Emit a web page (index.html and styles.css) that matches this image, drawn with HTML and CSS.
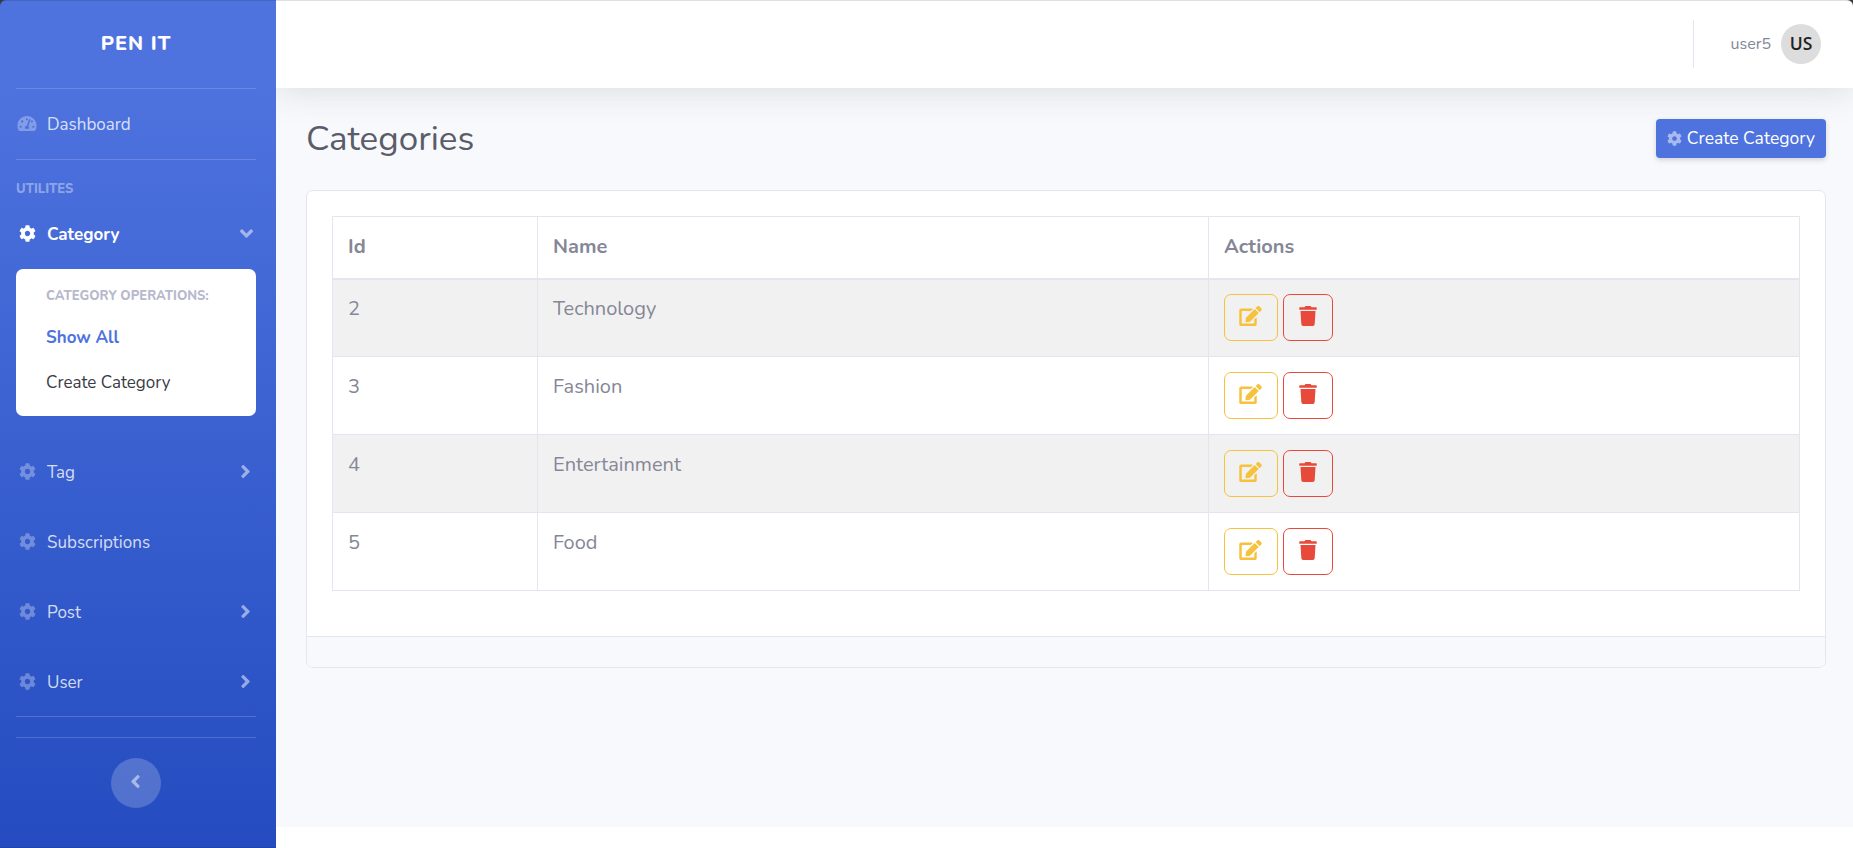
FILE: index.html
```html
<!DOCTYPE html>
<html lang="en">
<head>
<meta charset="utf-8">
<title>Categories</title>
<link rel="stylesheet" href="styles.css">
</head>
<body>
<svg class="sprite" aria-hidden="true">
  <symbol id="cog" viewBox="0 0 512 512"><path d="M487.4 315.7l-42.6-24.6c4.3-23.2 4.3-47 0-70.2l42.6-24.6c4.9-2.8 7.1-8.6 5.5-14-11.1-35.6-30-67.8-54.7-94.6-3.8-4.1-10-5.1-14.8-2.3L380.8 110c-17.9-15.4-38.5-27.3-60.8-35.1V25.8c0-5.6-3.9-10.5-9.4-11.7-36.7-8.2-74.3-7.8-109.2 0-5.5 1.2-9.4 6.1-9.4 11.7V75c-22.2 7.9-42.8 19.8-60.8 35.1L88.7 85.5c-4.9-2.8-11-1.9-14.8 2.3-24.7 26.7-43.6 58.9-54.7 94.6-1.7 5.4.6 11.2 5.5 14L67.3 221c-4.3 23.2-4.3 47 0 70.2l-42.6 24.6c-4.9 2.8-7.1 8.6-5.5 14 11.1 35.6 30 67.8 54.7 94.6 3.8 4.1 10 5.1 14.8 2.3l42.6-24.6c17.9 15.4 38.5 27.3 60.8 35.1v49.2c0 5.6 3.9 10.5 9.4 11.7 36.7 8.2 74.3 7.8 109.2 0 5.5-1.2 9.4-6.1 9.4-11.7v-49.2c22.2-7.9 42.8-19.8 60.8-35.1l42.6 24.6c4.9 2.8 11 1.9 14.8-2.3 24.7-26.7 43.6-58.9 54.7-94.6 1.5-5.5-.7-11.3-5.6-14.1zM256 336c-44.1 0-80-35.9-80-80s35.9-80 80-80 80 35.9 80 80-35.9 80-80 80z"/></symbol>
  <symbol id="gauge" viewBox="0 0 576 512"><path d="M288 32C128.94 32 0 160.94 0 320c0 52.8 14.25 102.26 39.06 144.8 5.61 9.62 16.3 15.2 27.44 15.2h443c11.14 0 21.83-5.58 27.44-15.2C561.75 422.26 576 372.8 576 320c0-159.06-128.94-288-288-288zm0 64c14.71 0 26.58 10.13 30.32 23.65-1.11 2.26-2.64 4.23-3.45 6.67l-9.22 27.67c-5.13 3.49-10.97 6.01-17.64 6.01-17.67 0-32-14.33-32-32S270.33 96 288 96zM96 384c-17.67 0-32-14.33-32-32s14.33-32 32-32 32 14.33 32 32-14.33 32-32 32zm48-160c-17.67 0-32-14.33-32-32s14.33-32 32-32 32 14.33 32 32-14.33 32-32 32zm246.77-72.41l-61.33 184C343.13 347.33 352 364.54 352 384c0 11.72-3.38 22.55-8.88 32H232.88c-5.5-9.45-8.88-20.28-8.88-32 0-33.94 26.5-61.43 59.9-63.59l61.34-184.01c4.17-12.56 17.73-19.45 30.36-15.17 12.57 4.19 19.35 17.79 15.17 30.36zm14.66 57.2l15.52-46.55c3.47-1.29 7.13-2.23 11.05-2.23 17.67 0 32 14.33 32 32s-14.33 32-32 32c-11.38-.01-20.89-6.28-26.57-15.22zM480 384c-17.67 0-32-14.33-32-32s14.33-32 32-32 32 14.33 32 32-14.33 32-32 32z"/></symbol>
  <symbol id="angle" viewBox="24 96 208 320"><path d="M224.3 273l-136 136c-9.4 9.4-24.6 9.4-33.9 0l-22.6-22.6c-9.4-9.4-9.4-24.6 0-33.9l96.4-96.4-96.4-96.4c-9.4-9.4-9.4-24.6 0-33.9L54.3 103c9.4-9.4 24.6-9.4 33.9 0l136 136c9.5 9.4 9.5 24.6.1 34z"/></symbol>
  <symbol id="edit" viewBox="0 0 576 512"><path d="M402.6 83.2l90.2 90.2c3.8 3.8 3.8 10 0 13.8L274.4 405.6l-92.8 10.3c-12.4 1.4-22.9-9.1-21.5-21.5l10.3-92.8L388.8 83.2c3.8-3.8 10-3.8 13.8 0zm162-22.9l-48.8-48.8c-15.2-15.2-39.9-15.2-55.2 0l-35.4 35.4c-3.8 3.8-3.8 10 0 13.8l90.2 90.2c3.8 3.8 10 3.8 13.8 0l35.4-35.4c15.2-15.3 15.2-40 0-55.2zM384 346.2V448H64V128h229.8c3.2 0 6.2-1.3 8.5-3.5l40-40c7.6-7.6 2.2-20.5-8.5-20.5H48C21.5 64 0 85.5 0 112v352c0 26.5 21.5 48 48 48h352c26.5 0 48-21.5 48-48V306.2c0-10.7-12.9-16-20.5-8.5l-40 40c-2.2 2.3-3.5 5.3-3.5 8.5z"/></symbol>
  <symbol id="trash" viewBox="0 0 448 512"><path d="M432 32H312l-9.4-18.7A24 24 0 0 0 281.1 0H166.8a23.72 23.72 0 0 0-21.4 13.3L136 32H16A16 16 0 0 0 0 48v32a16 16 0 0 0 16 16h416a16 16 0 0 0 16-16V48a16 16 0 0 0-16-16zM53.2 467a48 48 0 0 0 47.9 45h245.8a48 48 0 0 0 47.9-45L416 128H32z"/></symbol>
</svg>
<div class="wrapper">
  <nav class="sidebar">
    <a class="brand">PEN IT</a>
    <hr class="divider">
    <a class="nav-link"><span class="nav-icon"><svg class="gauge"><use href="#gauge"/></svg></span><span class="nav-text">Dashboard</span></a>
    <hr class="divider">
    <div class="heading">UTILITES</div>
    <a class="nav-link active"><span class="nav-icon"><svg class="cog"><use href="#cog"/></svg></span><span class="nav-text">Category</span><svg class="caret down"><use href="#angle"/></svg></a>
    <div class="submenu">
      <h6 class="submenu-title">CATEGORY OPERATIONS:</h6>
      <a class="submenu-item current">Show All</a>
      <a class="submenu-item">Create Category</a>
    </div>
    <a class="nav-link"><span class="nav-icon"><svg class="cog"><use href="#cog"/></svg></span><span class="nav-text">Tag</span><svg class="caret"><use href="#angle"/></svg></a>
    <a class="nav-link"><span class="nav-icon"><svg class="cog"><use href="#cog"/></svg></span><span class="nav-text">Subscriptions</span></a>
    <a class="nav-link"><span class="nav-icon"><svg class="cog"><use href="#cog"/></svg></span><span class="nav-text">Post</span><svg class="caret"><use href="#angle"/></svg></a>
    <a class="nav-link last"><span class="nav-icon"><svg class="cog"><use href="#cog"/></svg></span><span class="nav-text">User</span><svg class="caret"><use href="#angle"/></svg></a>
    <hr class="divider">
    <hr class="divider spaced">
    <button class="toggle"><svg class="caret left"><use href="#angle"/></svg></button>
  </nav>
  <div class="content">
    <header class="topbar">
      <div class="topbar-divider"></div>
      <span class="username">user5</span>
      <span class="avatar">US</span>
    </header>
    <main class="page">
      <div class="page-head">
        <h1>Categories</h1>
        <a class="btn-create"><svg class="cog"><use href="#cog"/></svg><span>Create Category</span></a>
      </div>
      <section class="card">
        <div class="card-body">
          <table>
            <colgroup><col class="col-id"><col class="col-name"><col></colgroup>
            <thead><tr><th>Id</th><th>Name</th><th>Actions</th></tr></thead>
            <tbody>
              <tr><td>2</td><td>Technology</td><td><div class="actions"><a class="btn edit"><svg><use href="#edit"/></svg></a><a class="btn delete"><svg><use href="#trash"/></svg></a></div></td></tr>
              <tr><td>3</td><td>Fashion</td><td><div class="actions"><a class="btn edit"><svg><use href="#edit"/></svg></a><a class="btn delete"><svg><use href="#trash"/></svg></a></div></td></tr>
              <tr><td>4</td><td>Entertainment</td><td><div class="actions"><a class="btn edit"><svg><use href="#edit"/></svg></a><a class="btn delete"><svg><use href="#trash"/></svg></a></div></td></tr>
              <tr><td>5</td><td>Food</td><td><div class="actions"><a class="btn edit"><svg><use href="#edit"/></svg></a><a class="btn delete"><svg><use href="#trash"/></svg></a></div></td></tr>
            </tbody>
          </table>
        </div>
        <div class="card-footer"></div>
      </section>
    </main>
  </div>
</div>
</body>
</html>
```
FILE: styles.css
```css
* { box-sizing: border-box; }

body {
  margin: 0;
  height: 848px;
  overflow: hidden;
  background: #fff;
  color: #858796;
  font: 400 20px/30px Nunito, Lato, sans-serif;
}

/* Window edge: hairline on top, rounded dark corners */
body::after {
  content: "";
  position: fixed;
  z-index: 2;
  inset: 0;
  border-top: 1px solid rgba(0, 0, 0, .12);
  border-radius: 6px 6px 0 0;
  box-shadow: 0 0 0 10px #3a3a3a;
  pointer-events: none;
}

.sprite { display: none; }
svg { display: block; fill: currentColor; }

.wrapper { display: flex; height: 848px; }

.sidebar {
  position: relative;
  z-index: 1;
  display: flex;
  flex-direction: column;
  flex: none;
  width: 276px;
  padding: 0 20px 0 16px;
  background: linear-gradient(180deg, #4e73df 10%, #244cc0 100%);
  border-bottom: 1px solid #2244a8;
  color: rgba(255, 255, 255, .8);
  font-size: 17px;
}

.brand {
  height: 88px;
  color: #fff;
  font-size: 20px;
  font-weight: 800;
  letter-spacing: 1px;
  line-height: 87px;
  text-align: center;
}

.divider {
  width: 100%;
  height: 1px;
  margin: 0;
  border: 0;
  background: rgba(255, 255, 255, .17);
}
.divider.spaced { margin-top: 20px; }

.nav-link {
  display: flex;
  align-items: center;
  gap: 9px;
  height: 70px;
}
.nav-link.last { margin-bottom: -1px; }
.nav-link.active { color: #fff; font-weight: 700; }
.nav-text { padding-top: 2px; }
.nav-icon {
  display: flex;
  justify-content: center;
  width: 22px;
  padding-bottom: 1px;
  color: rgba(255, 255, 255, .3);
}
.active .nav-icon { color: #fff; }
.nav-icon .cog { width: 17px; height: 17px; }
.nav-icon .gauge { width: 20px; height: 17px; }

.caret {
  width: 9px;
  height: 13px;
  margin: -2px 6px 0 auto;
  color: rgba(255, 255, 255, .5);
}
.caret.down { margin-right: 5px; transform: rotate(90deg); }
.caret.left { margin: 0; transform: rotate(180deg); }

.heading {
  height: 39px;
  padding-top: 20px;
  color: rgba(255, 255, 255, .4);
  font-size: 13px;
  font-weight: 800;
  line-height: 18px;
}

.submenu {
  height: 147px;
  margin-bottom: 21px;
  padding: 8px 0 0 30px;
  border-radius: 7px;
  background: #fff;
}
.submenu-title {
  height: 38px;
  margin: 0;
  color: #b7b9cc;
  font-size: 13px;
  font-weight: 800;
  line-height: 39px;
}
.submenu-item { display: block; color: #3a3b45; line-height: 45px; }
.submenu-item.current { color: #4e73df; font-weight: 700; }

.toggle {
  display: grid;
  place-items: center;
  align-self: center;
  width: 50px;
  height: 50px;
  margin-top: 20px;
  padding: 0 2px 3px 0;
  border: 0;
  border-radius: 50%;
  background: rgba(255, 255, 255, .2);
}

.content {
  display: flex;
  flex-direction: column;
  flex: 1;
  height: 827px;
  background: #f8f9fc;
}

.topbar {
  display: flex;
  align-items: center;
  justify-content: flex-end;
  height: 88px;
  padding-right: 32px;
  background: #fff;
  box-shadow: 0 3px 35px rgba(58, 59, 69, .15);
}
.topbar-divider { width: 1px; height: 48px; margin-right: 36px; background: #e3e6f0; }
.username { margin-right: 10px; font-size: 16px; }
.avatar {
  width: 40px;
  height: 40px;
  border-radius: 50%;
  background: #ddd;
  color: #222;
  font: 600 17.5px/38px "Open Sans", sans-serif;
  text-align: center;
}

.page { padding: 31px 27px 0 30px; }
.page-head {
  display: flex;
  align-items: center;
  justify-content: space-between;
  height: 39px;
  margin-bottom: 32px;
}
h1 { margin: 0; color: #5a5c69; font-size: 35px; font-weight: 400; line-height: 39px; }

.btn-create {
  display: flex;
  align-items: center;
  gap: 5px;
  height: 39px;
  padding: 0 11px;
  border-radius: 4px;
  background: #4e73df;
  box-shadow: 0 2px 5px rgba(58, 59, 69, .2);
  color: #fff;
  font-size: 17.5px;
}
.btn-create span { padding-bottom: 1px; }
.btn-create .cog { width: 15px; height: 15px; color: rgba(255, 255, 255, .5); }

.card {
  overflow: hidden;
  border: 1px solid #e3e6f0;
  border-radius: 7px;
  background: #fff;
}
.card-body { padding: 25px 25px 45px; }
.card-footer { height: 31px; border-top: 1px solid #e3e6f0; background: #f8f9fc; }

table { width: 100%; border-collapse: collapse; table-layout: fixed; }
.col-id { width: 205px; }
.col-name { width: 671px; }
th, td {
  padding: 15px 15px 0;
  border: 1px solid #e3e6f0;
  text-align: left;
  vertical-align: top;
}
th { height: 62px; border-bottom-width: 2px; font-weight: 700; }
td { height: 78px; }
tbody tr:first-child td { padding-top: 14.5px; }
tbody tr:nth-child(odd) { background: #f1f1f1; }

.actions { display: flex; gap: 5px; }
.btn {
  display: grid;
  place-items: center;
  height: 47px;
  padding-bottom: 3px;
  border: 1px solid;
  border-radius: 7px;
}
.edit { width: 54px; padding-right: 1px; color: #f6c23e; }
.edit svg { width: 23px; height: 20px; }
.delete { width: 50px; color: #e74a3b; }
.delete svg { width: 18px; height: 20px; }
```
